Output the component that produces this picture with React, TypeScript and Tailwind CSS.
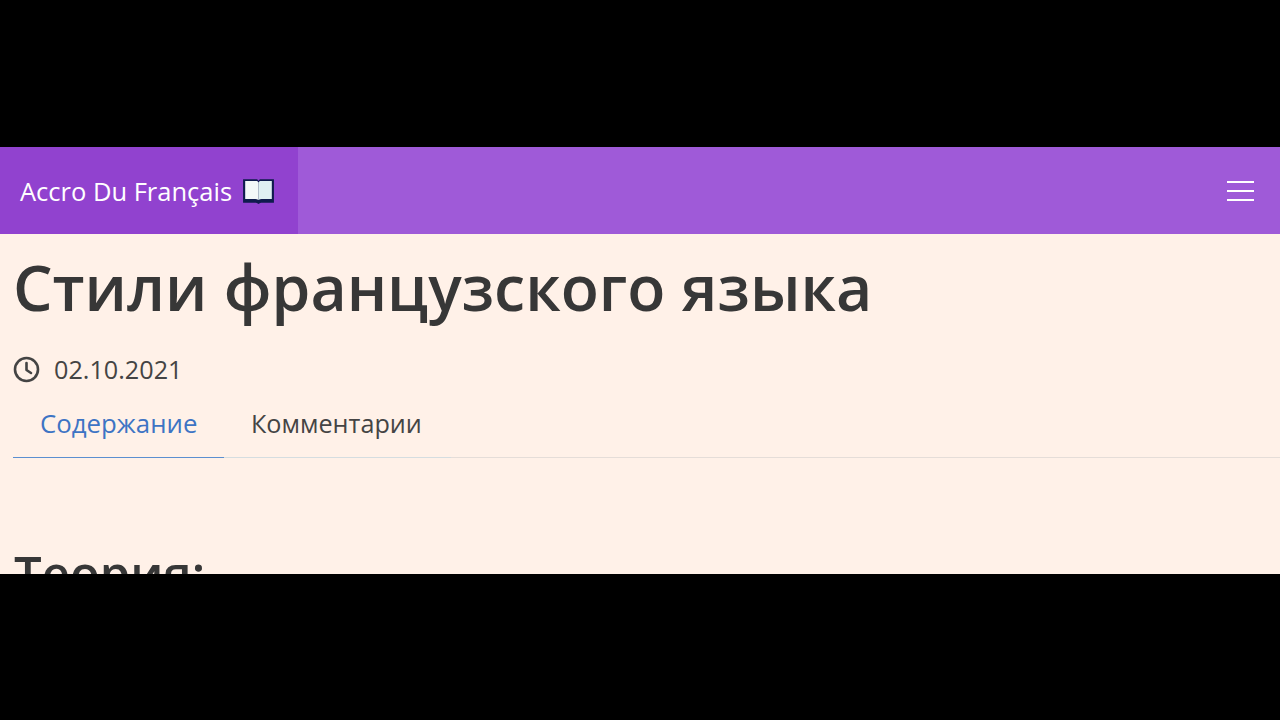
import React from "react";

const App: React.FC = () => {
  return (
    <div className="flex h-[720px] w-[1280px] flex-col overflow-hidden bg-black font-['Open_Sans','Noto_Sans',sans-serif]">
      <div className="h-[147px] shrink-0" />

      <div className="h-[427px] shrink-0 overflow-hidden bg-[#fff1e8]">
        {/* Navbar */}
        <nav className="flex h-[87px] items-center justify-between bg-[#9f5ad8]">
          <div className="flex h-full w-[298px] items-center gap-[10px] bg-[#9142cf] pl-[20px]">
            <span className="text-[25.5px] leading-[36px] text-white">Accro Du Français</span>
            <svg width="33" height="30" viewBox="0 0 31 26" fill="none">
              <path d="M1 2h12.500c1 0 1.500.5 2 1.500.5-1 1-1.500 2-1.500H30v22H19c-1.500 0-2.500.3-3.500 1.200-1-.9-2-1.200-3.500-1.200H1z" fill="#0f1b4d" />
              <path d="M3 3.500h10.500c1 0 1.600.5 2 1.500v16.500c-.9-.7-1.900-1-3-1H3z" fill="#f3f8f8" />
              <path d="M28 3.500H17.500c-1 0-1.600.5-2 1.500v16.500c.9-.7 1.900-1 3-1H28z" fill="#dff0f2" />
            </svg>
          </div>
          <button className="mr-[26px] flex w-[27px] flex-col gap-[7px]" aria-label="Меню">
            <span className="h-[2px] bg-white" />
            <span className="h-[2px] bg-white" />
            <span className="h-[2px] bg-white" />
          </button>
        </nav>

        {/* Content */}
        <main className="pl-[13px]">
          <h1 className="mt-[9px] h-[87px] text-[62.5px] leading-[87px] font-semibold text-[#373737]">
            Стили французского языка
          </h1>
          <div className="mt-[22px] flex items-center gap-[14px] text-[#444]">
            <svg width="27" height="27" viewBox="0 0 27 27" fill="none" stroke="currentColor" strokeWidth="2.600" strokeLinecap="round" strokeLinejoin="round">
              <circle cx="13.500" cy="13.500" r="11.500" />
              <path d="M13.500 7v7l4.500 3" />
            </svg>
            <span className="text-[25.2px] leading-[34px] font-normal">02.10.2021</span>
          </div>

          {/* Tabs */}
          <div className="mt-[20px] flex h-[52px] leading-[34px]">
            <div className="w-[211px] border-b border-[#5b8fd0] pl-[27px] text-[25.8px] text-[#3d74c4]">Содержание</div>
            <div className="w-[227px] border-b border-[#d5dde0] pl-[27px] text-[25.2px] text-[#444]">Комментарии</div>
            <div className="flex-1 border-b border-[#e5ddd8]" />
          </div>

          <h2 className="mt-[82px] pl-px text-[49px] leading-[66px] font-semibold text-[#373737]">Теория:</h2>
        </main>
      </div>
    </div>
  );
};

export default App;
